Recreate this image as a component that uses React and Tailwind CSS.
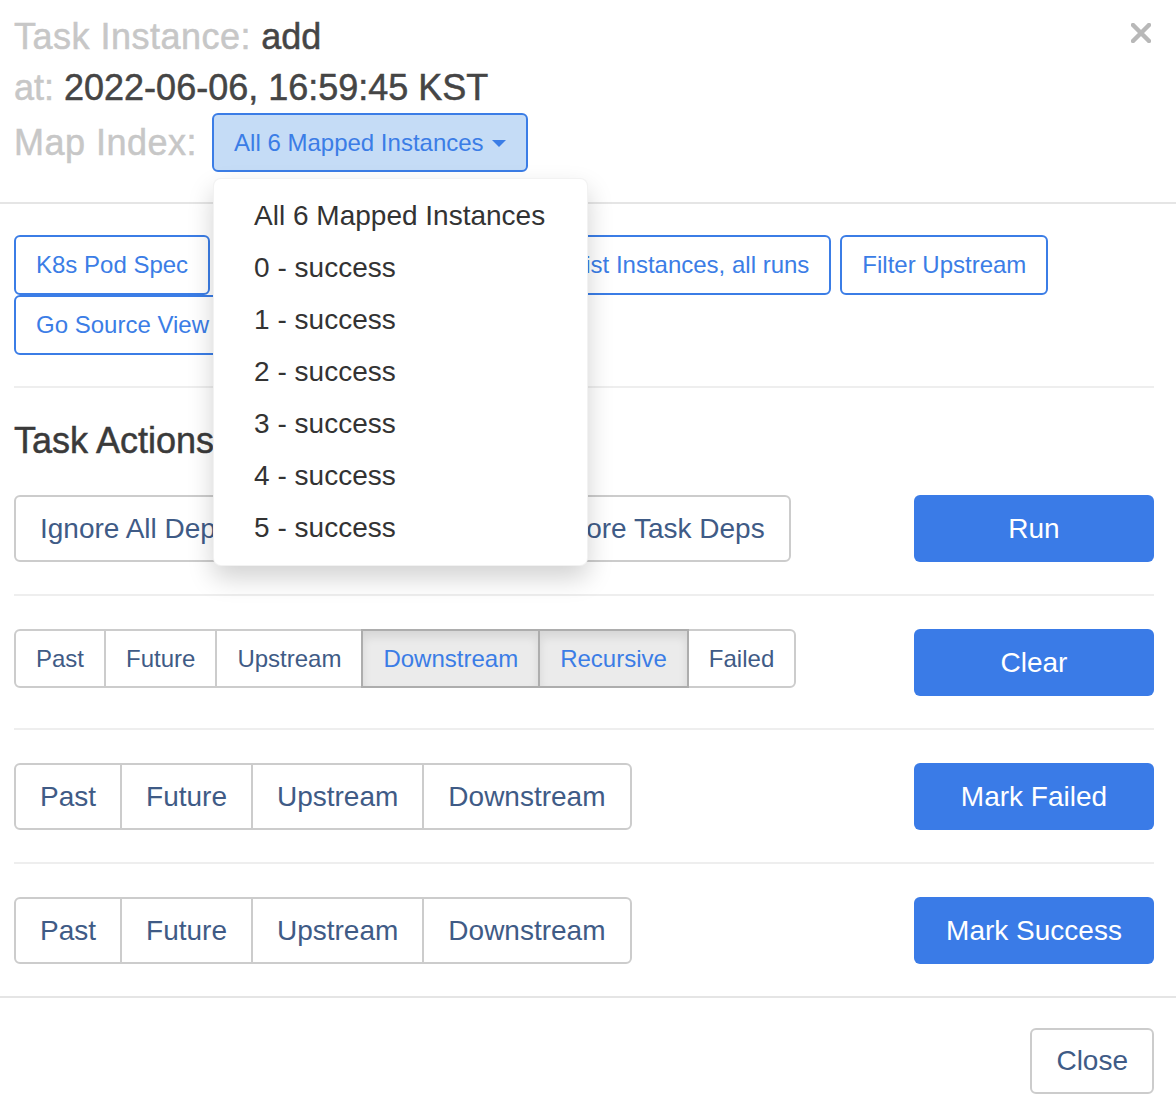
import React from "react";

const linkBtn =
    "rounded-[6px] border-2 border-[#3b7de6] bg-white px-5 py-[10px] text-[24px] leading-[36px] text-[#3b7de6] whitespace-nowrap";

const primaryBtn =
    "w-[240px] h-[67px] shrink-0 rounded-[6px] bg-[#3a7be7] text-[28px] text-white";

const ButtonGroup = ({ items, small }) => (
    <div className="flex">
        {items.map((item, i) => {
            const active = item.active;
            return (
                <button
                    key={item.label}
                    className={[
                        "border-2 whitespace-nowrap",
                        small
                            ? "px-5 py-[10px] text-[24px] leading-[35px]"
                            : "px-6 py-[11px] text-[28px] leading-[41px]",
                        i === 0 ? "rounded-l-[6px]" : "-ml-[2px]",
                        i === items.length - 1 ? "rounded-r-[6px]" : "",
                        active
                            ? "relative z-[1] border-[#adadad] bg-[#ebebeb] text-[#3b7de6] shadow-[inset_0_6px_10px_rgba(0,0,0,0.09)]"
                            : "border-[#cccccc] bg-white text-[#3f5b86]",
                    ].join(" ")}
                >
                    {item.label}
                </button>
            );
        })}
    </div>
);

const mapOptions = [
    "All 6 Mapped Instances",
    "0 - success",
    "1 - success",
    "2 - success",
    "3 - success",
    "4 - success",
    "5 - success",
];

const App = () => {
    return (
        <div className="relative min-h-[1100px] w-[1176px] bg-white font-['Liberation_Sans',Arial,sans-serif]">
            {/* header */}
            <div className="border-b-2 border-[#e5e5e5] pb-[30px] pl-[14px] pr-[22px] pt-[11px]">
                <div className="text-[36px] leading-[51px] text-[#c7c7c7] [-webkit-text-stroke:0.5px]">
                    <span className="tracking-[0.5px]">Task Instance:</span>{" "}
                    <span className="text-[#454545]">add</span>
                </div>
                <div className="text-[36px] leading-[51px] text-[#c7c7c7] [-webkit-text-stroke:0.5px]">
                    at: <span className="text-[#454545]">2022-06-06, 16:59:45 KST</span>
                </div>
                <div className="flex items-center">
                    <span className="text-[36px] leading-[51px] tracking-[0.5px] text-[#c7c7c7] [-webkit-text-stroke:0.5px]">
                        Map Index:
                    </span>
                    <div className="relative ml-[15px]">
                        <button className="flex h-[59px] items-center whitespace-nowrap rounded-[6px] border-2 border-[#3b7de6] bg-[#c5dcf6] px-5 text-[24px] text-[#3b7de6]">
                            All 6 Mapped Instances
                            <span className="ml-[8px] mt-[2px] h-0 w-0 border-x-[7px] border-t-[7px] border-x-transparent border-t-[#3b7de6]" />
                        </button>
                        <ul className="absolute left-[1px] top-[65px] z-20 w-[375px] rounded-[8px] border border-black/5 bg-white py-[11px] shadow-[0_12px_26px_rgba(0,0,0,0.18)]">
                            {mapOptions.map((opt) => (
                                <li
                                    key={opt}
                                    className="whitespace-nowrap px-[40px] py-[6px] text-[28px] leading-[40px] text-[#333333]"
                                >
                                    {opt}
                                </li>
                            ))}
                        </ul>
                    </div>
                </div>
                <button className="absolute right-[25px] top-[23px]" aria-label="close">
                    <svg width="20" height="20" viewBox="0 0 20 20">
                        <path d="M2 2 L18 18 M18 2 L2 18" stroke="#b8b8b8" strokeWidth="4.5" strokeLinecap="round" />
                    </svg>
                </button>
            </div>

            {/* body */}
            <div className="pb-[32px] pl-[14px] pr-[22px] pt-[31px]">
                <div className="flex flex-wrap gap-x-[9px]">
                    <button className={linkBtn}>K8s Pod Spec</button>
                    <button className={linkBtn}>Instance Details</button>
                    <button className={linkBtn + " w-[98px]"}>Log</button>
                    <button className={linkBtn}>List Instances, all runs</button>
                    <button className={linkBtn}>Filter Upstream</button>
                    <button className={linkBtn}>Go Source View</button>
                </div>
                <hr className="mt-[31px] border-t-2 border-[#eeeeee]" />

                <h4 className="mb-[34px] mt-[33px] text-[36px] leading-[40px] text-[#3a3a3a] [-webkit-text-stroke:0.5px]">
                    Task Actions
                </h4>

                <div className="flex items-start justify-between">
                    <ButtonGroup
                        items={[
                            { label: "Ignore All Deps" },
                            { label: "Ignore Task State" },
                            { label: "Ignore Task Deps" },
                        ]}
                    />
                    <button className={primaryBtn}>Run</button>
                </div>
                <hr className="mb-[33px] mt-[32px] border-t-2 border-[#eeeeee]" />

                <div className="flex items-start justify-between">
                    <ButtonGroup
                        small
                        items={[
                            { label: "Past" },
                            { label: "Future" },
                            { label: "Upstream" },
                            { label: "Downstream", active: true },
                            { label: "Recursive", active: true },
                            { label: "Failed" },
                        ]}
                    />
                    <button className={primaryBtn}>Clear</button>
                </div>
                <hr className="mb-[33px] mt-[32px] border-t-2 border-[#eeeeee]" />

                <div className="flex items-start justify-between">
                    <ButtonGroup
                        items={[
                            { label: "Past" },
                            { label: "Future" },
                            { label: "Upstream" },
                            { label: "Downstream" },
                        ]}
                    />
                    <button className={primaryBtn}>Mark Failed</button>
                </div>
                <hr className="mb-[33px] mt-[32px] border-t-2 border-[#eeeeee]" />

                <div className="flex items-start justify-between">
                    <ButtonGroup
                        items={[
                            { label: "Past" },
                            { label: "Future" },
                            { label: "Upstream" },
                            { label: "Downstream" },
                        ]}
                    />
                    <button className={primaryBtn}>Mark Success</button>
                </div>
            </div>

            {/* footer */}
            <div className="flex justify-end border-t-2 border-[#e5e5e5] pb-[8px] pr-[22px] pt-[30px]">
                <button className="h-[66px] rounded-[6px] border-2 border-[#cccccc] bg-white px-6 text-[28px] text-[#3f5b86]">
                    Close
                </button>
            </div>
        </div>
    );
};

export default App;
